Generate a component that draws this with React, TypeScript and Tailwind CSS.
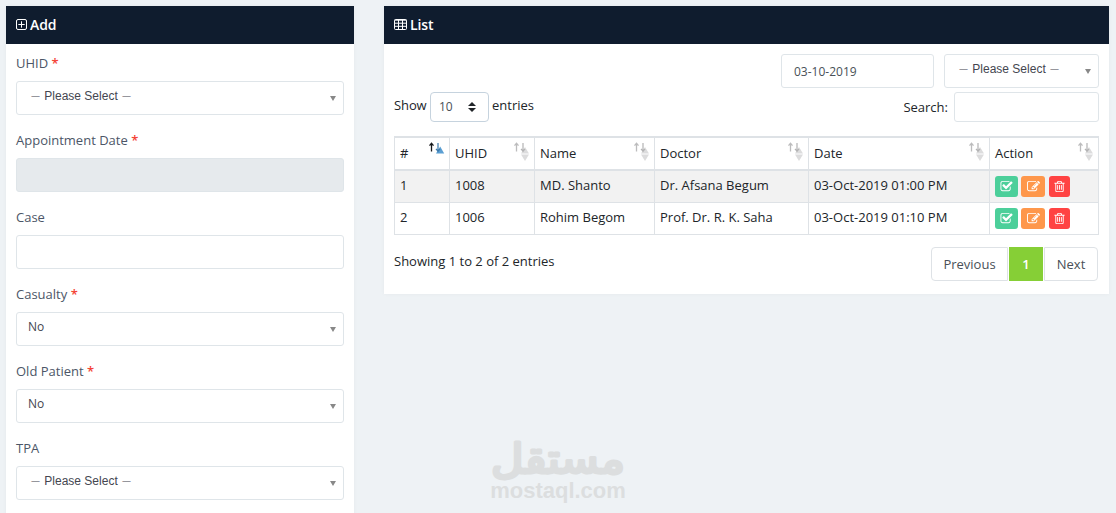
import React from 'react';

interface Field {
  label: string;
  required?: boolean;
  kind: 'select' | 'input' | 'disabled';
  value?: string;
}

const fields: Field[] = [
  { label: 'UHID', required: true, kind: 'select' },
  { label: 'Appointment Date', required: true, kind: 'disabled' },
  { label: 'Case', kind: 'input' },
  { label: 'Casualty', required: true, kind: 'select', value: 'No' },
  { label: 'Old Patient', required: true, kind: 'select', value: 'No' },
  { label: 'TPA', kind: 'select' },
];

const columns = [
  { name: '#', width: 'w-[55px]' },
  { name: 'UHID', width: 'w-[85px]' },
  { name: 'Name', width: 'w-[120px]' },
  { name: 'Doctor', width: 'w-[154px]' },
  { name: 'Date', width: 'w-[181px]' },
  { name: 'Action', width: 'w-[109px]' },
];

const rows = [
  ['1', '1008', 'MD. Shanto', 'Dr. Afsana Begum', '03-Oct-2019 01:00 PM'],
  ['2', '1006', 'Rohim Begom', 'Prof. Dr. R. K. Saha', '03-Oct-2019 01:10 PM'],
];

const CHECK =
  'M1472 930v318q0 119-84.5 203.5t-203.5 84.5h-832q-119 0-203.5-84.5t-84.5-203.5v-832q0-119 84.5-203.5t203.5-84.5h832q63 0 117 25 15 7 18 23 3 17-9 29l-49 49q-10 10-23 10-3 0-9-2-23-6-45-6h-832q-66 0-113 47t-47 113v832q0 66 47 113t113 47h832q66 0 113-47t47-113v-254q0-13 9-22l64-64q10-10 23-10 6 0 12 3 20 8 20 29zm231-489l-814 814q-24 24-57 24t-57-24l-430-430q-24-24-24-57t24-57l110-110q24-24 57-24t57 24l263 263 647-647q24-24 57-24t57 24l110 110q24 24 24 57t-24 57z';
const EDIT =
  'M888 1184l116-116-152-152-116 116v56h96v96h56zm440-720q-16-16-33 1l-350 350q-17 17-1 33t33-1l350-350q17-17 1-33zm80 594v190q0 119-84.5 203.5t-203.5 84.5h-832q-119 0-203.5-84.5t-84.5-203.5v-832q0-119 84.5-203.5t203.5-84.5h832q63 0 117 25 15 7 18 23 3 17-9 29l-49 49q-14 14-32 8-23-6-45-6h-832q-66 0-113 47t-47 113v832q0 66 47 113t113 47h832q66 0 113-47t47-113v-126q0-13 9-22l64-64q15-15 35-7t20 29zm-96-738l288 288-672 672h-288v-288zm444 132l-92 92-288-288 92-92q28-28 68-28t68 28l152 152q28 28 28 68t-28 68z';
const TRASH =
  'M704 736v576q0 14-9 23t-23 9h-64q-14 0-23-9t-9-23v-576q0-14 9-23t23-9h64q14 0 23 9t9 23zm256 0v576q0 14-9 23t-23 9h-64q-14 0-23-9t-9-23v-576q0-14 9-23t23-9h64q14 0 23 9t9 23zm256 0v576q0 14-9 23t-23 9h-64q-14 0-23-9t-9-23v-576q0-14 9-23t23-9h64q14 0 23 9t9 23zm128 724v-948h-896v948q0 22 7 40.5t14.5 27 10.5 8.5h832q3 0 10.5-8.5t14.5-27 7-40.5zm-672-1076h448l-48-117q-7-9-17-11h-317q-10 2-17 11zm928 32v64q0 14-9 23t-23 9h-96v948q0 83-47 143.5t-113 60.5h-832q-66 0-113-58.5t-47-141.5v-952h-96q-14 0-23-9t-9-23v-64q0-14 9-23t23-9h309l70-167q15-37 54-63t79-26h320q40 0 79 26t54 63l70 167h309q14 0 23 9t9 23z';

const ActionIcon: React.FC<{ path: string }> = ({ path }) => (
  <svg viewBox="0 0 1792 1792" className="w-[13px] h-[13px] fill-white">
    <path d={path} />
  </svg>
);

const PanelHeader: React.FC<{ icon: React.ReactNode; title: string }> = ({ icon, title }) => (
  <div className="h-[38px] bg-[#0f1c2e] text-white px-2.5 flex items-center text-sm font-semibold tracking-[-0.1px]">
    {icon}
    <span>{title}</span>
  </div>
);

const SelectBox: React.FC<{ value?: string; className?: string }> = ({ value, className = '' }) => (
  <div
    className={`h-[34px] border border-[#dfe5e9] rounded-[3px] bg-white flex items-center justify-between pl-3 pr-[7px] ${className}`}
  >
    <span className="text-xs leading-4 text-[#444650] -mt-1 whitespace-pre">
      {value ? (
        <span className="-ml-px">{value}</span>
      ) : (
        <>
          <span className="ml-0.5 mr-px text-[9px] relative -top-px">—</span>
          <span className="font-['Liberation_Sans',sans-serif]"> Please Select </span>
          <span className="ml-px text-[9px] relative -top-px">—</span>
        </>
      )}
    </span>
    <svg viewBox="0 0 6 5" className="w-1.5 h-[5px] mt-px fill-[#888]">
      <path d="M0 0h6L3 5z" />
    </svg>
  </div>
);

// arrows are drawn over the faded triangles, the first column is the sorted one
const SortIcon: React.FC<{ active?: boolean }> = ({ active }) => (
  <svg
    viewBox="0 0 17 20"
    className="absolute right-[3px] top-[3px] w-[17px] h-5"
    fill="none"
  >
    {active ? (
      <path d="M7 12.5L11.2 5.5L15.2 12.5z" fill="#5b9fd3" />
    ) : (
      <>
        <path d="M7 12.5L11 6L15 12.5z" fill="#dcdcdd" />
        <path d="M7 13.5H15L11 20z" fill="#dcdcdd" />
      </>
    )}
    <path d="M2.5 10.5V2.5M0.5 4.7L2.5 2.2L4.5 4.7" stroke={active ? '#16181b' : '#bcbcbd'} strokeWidth="1.3" />
    <path d="M9 2V10M7 7.8L9 10.3L11 7.8" stroke={active ? '#3b79ab' : '#b3b3b4'} strokeWidth="1.2" />
  </svg>
);

const AddPanel = () => (
  <div className="w-[348px] h-[520px] shrink-0 bg-white shadow-[0_0_4px_rgba(0,0,50,0.04)]">
    <PanelHeader
      title="Add"
      icon={
        <svg viewBox="0 0 11 11" className="w-[11px] h-[11px] mr-[3px] -mt-px" fill="none" stroke="white">
          <rect x="0.5" y="0.5" width="10" height="10" rx="1.5" />
          <path d="M5.5 2.3v6.4M2.3 5.5h6.4" />
        </svg>
      }
    />
    <div className="p-2.5 flex flex-col gap-4">
      {fields.map((field) => (
        <div key={field.label}>
          <div className="h-[19px] mb-2 leading-[19px] text-[#4c5667]">
            {field.label} {field.required && <span className="text-[#f44336] font-semibold">*</span>}
          </div>
          {field.kind === 'select' ? (
            <SelectBox value={field.value} />
          ) : (
            <div
              className={`h-[34px] border border-[#dfe5e9] rounded-[3px] ${
                field.kind === 'disabled' ? 'bg-[#e6eaed]' : 'bg-white'
              }`}
            />
          )}
        </div>
      ))}
    </div>
  </div>
);

const ListPanel = () => (
  <div className="w-[725px] h-[288px] shrink-0 bg-white shadow-[0_0_4px_rgba(0,0,50,0.04)]">
    <PanelHeader
      title="List"
      icon={
        <svg viewBox="0 0 13 11" className="w-[13px] h-[11px] mr-[3px] -mt-px" fill="none" stroke="white">
          <rect x="0.5" y="0.5" width="12" height="10" rx="1" />
          <path d="M0.5 1.2h12M0.5 4.2h12M0.5 7.3h12M4.5 1v9.5M8.5 1v9.5" />
        </svg>
      }
    />
    <div className="p-2.5">
      <div className="flex justify-end gap-2.5">
        <div className="w-[153px] h-[34px] border border-[#dfe5e9] rounded-[3px] px-3 text-xs leading-[33px] text-[#495057]">
          03-10-2019
        </div>
        <SelectBox className="w-[155px]" />
      </div>
      <div className="flex justify-between mt-1">
        <div className="flex h-[30px] leading-[27px]">
          <span className="w-8 tracking-[-0.1px]">Show</span>
          <div className="w-[59px] h-[30px] ml-1 mr-[3px] border border-[#c6d3de] rounded-[4px] flex items-center justify-between pl-2 pr-3 text-xs text-[#495057]">
            10
            <svg viewBox="0 0 8 10" className="w-2 h-2.5 fill-[#212529]">
              <path d="M4 0l4 4H0zM0 6h8l-4 4z" />
            </svg>
          </div>
          entries
        </div>
        <div className="flex leading-[30px]">
          Search:
          <div className="w-[145px] h-[30px] ml-1.5 border border-[#dfe5e9] rounded-[3px]" />
        </div>
      </div>
      <table className="w-[705px] mt-3.5 table-fixed border-separate border-spacing-0 border-l border-t-2 border-[#dee2e6]">
        <thead>
          <tr className="h-[33px]">
            {columns.map((col, index) => (
              <th
                key={col.name}
                className={`relative ${col.width} p-0 pl-[5px] text-left font-normal border-r border-b-2 border-[#dee2e6]`}
              >
                {col.name}
                <SortIcon active={index === 0} />
              </th>
            ))}
          </tr>
        </thead>
        <tbody>
          {rows.map((row, index) => (
            <tr key={row[0]} className={`h-8 ${index === 0 ? 'bg-[#f2f2f2]' : 'bg-white'}`}>
              {row.map((cell) => (
                <td key={cell} className="p-0 pl-[5px] pb-px border-r border-b border-[#dee2e6] whitespace-nowrap">
                  {cell}
                </td>
              ))}
              <td className="p-0 pl-[5px] border-r border-b border-[#dee2e6]">
                <div className="flex h-[21px]">
                  <button className="w-[23px] rounded-[3px] bg-[#4ccf9a] flex items-center justify-center">
                    <ActionIcon path={CHECK} />
                  </button>
                  <button className="w-6 ml-[3px] rounded-[3px] bg-[#fe974b] flex items-center justify-center">
                    <ActionIcon path={EDIT} />
                  </button>
                  <button className="w-[21px] ml-1 rounded-[3px] bg-[#ff4343] flex items-center justify-center">
                    <ActionIcon path={TRASH} />
                  </button>
                </div>
              </td>
            </tr>
          ))}
        </tbody>
      </table>
      <div className="flex justify-between mt-3 pr-px">
        <div className="leading-7">Showing 1 to 2 of 2 entries</div>
        <div className="flex h-[34px] leading-8 text-center text-[#495057]">
          <div className="w-[77px] border border-[#dee2e6] rounded-l-[4px]">Previous</div>
          <div className="w-[34px] mx-px border border-[#86cf36] bg-[#86cf36] text-white font-semibold">1</div>
          <div className="w-[54px] border border-[#dee2e6] rounded-r-[4px]">Next</div>
        </div>
      </div>
    </div>
  </div>
);

const Watermark = () => (
  <svg
    viewBox="0 0 160 90"
    className="absolute left-[478px] top-[422px] w-[160px] h-[90px] fill-[#dcdedf]"
  >
    <text
      x="80"
      y="51"
      textAnchor="middle"
      textLength="134"
      lengthAdjust="spacingAndGlyphs"
      stroke="#dcdedf"
      strokeWidth="3"
      strokeLinejoin="round"
      className="font-['DejaVu_Sans',sans-serif] text-[41px]"
    >
      مستقل
    </text>
    <text x="80" y="76" textAnchor="middle" className="font-['Liberation_Sans',sans-serif] font-bold text-[22px]">
      mostaql.com
    </text>
  </svg>
);

const App: React.FC = () => {
  return (
    <div className="relative w-[1116px] h-[513px] overflow-hidden bg-[#eef2f5] p-1.5 flex items-start gap-[30px] font-['Open_Sans',sans-serif] text-[13px] text-[#212529]">
      <AddPanel />
      <ListPanel />
      <Watermark />
    </div>
  );
};

export default App;
